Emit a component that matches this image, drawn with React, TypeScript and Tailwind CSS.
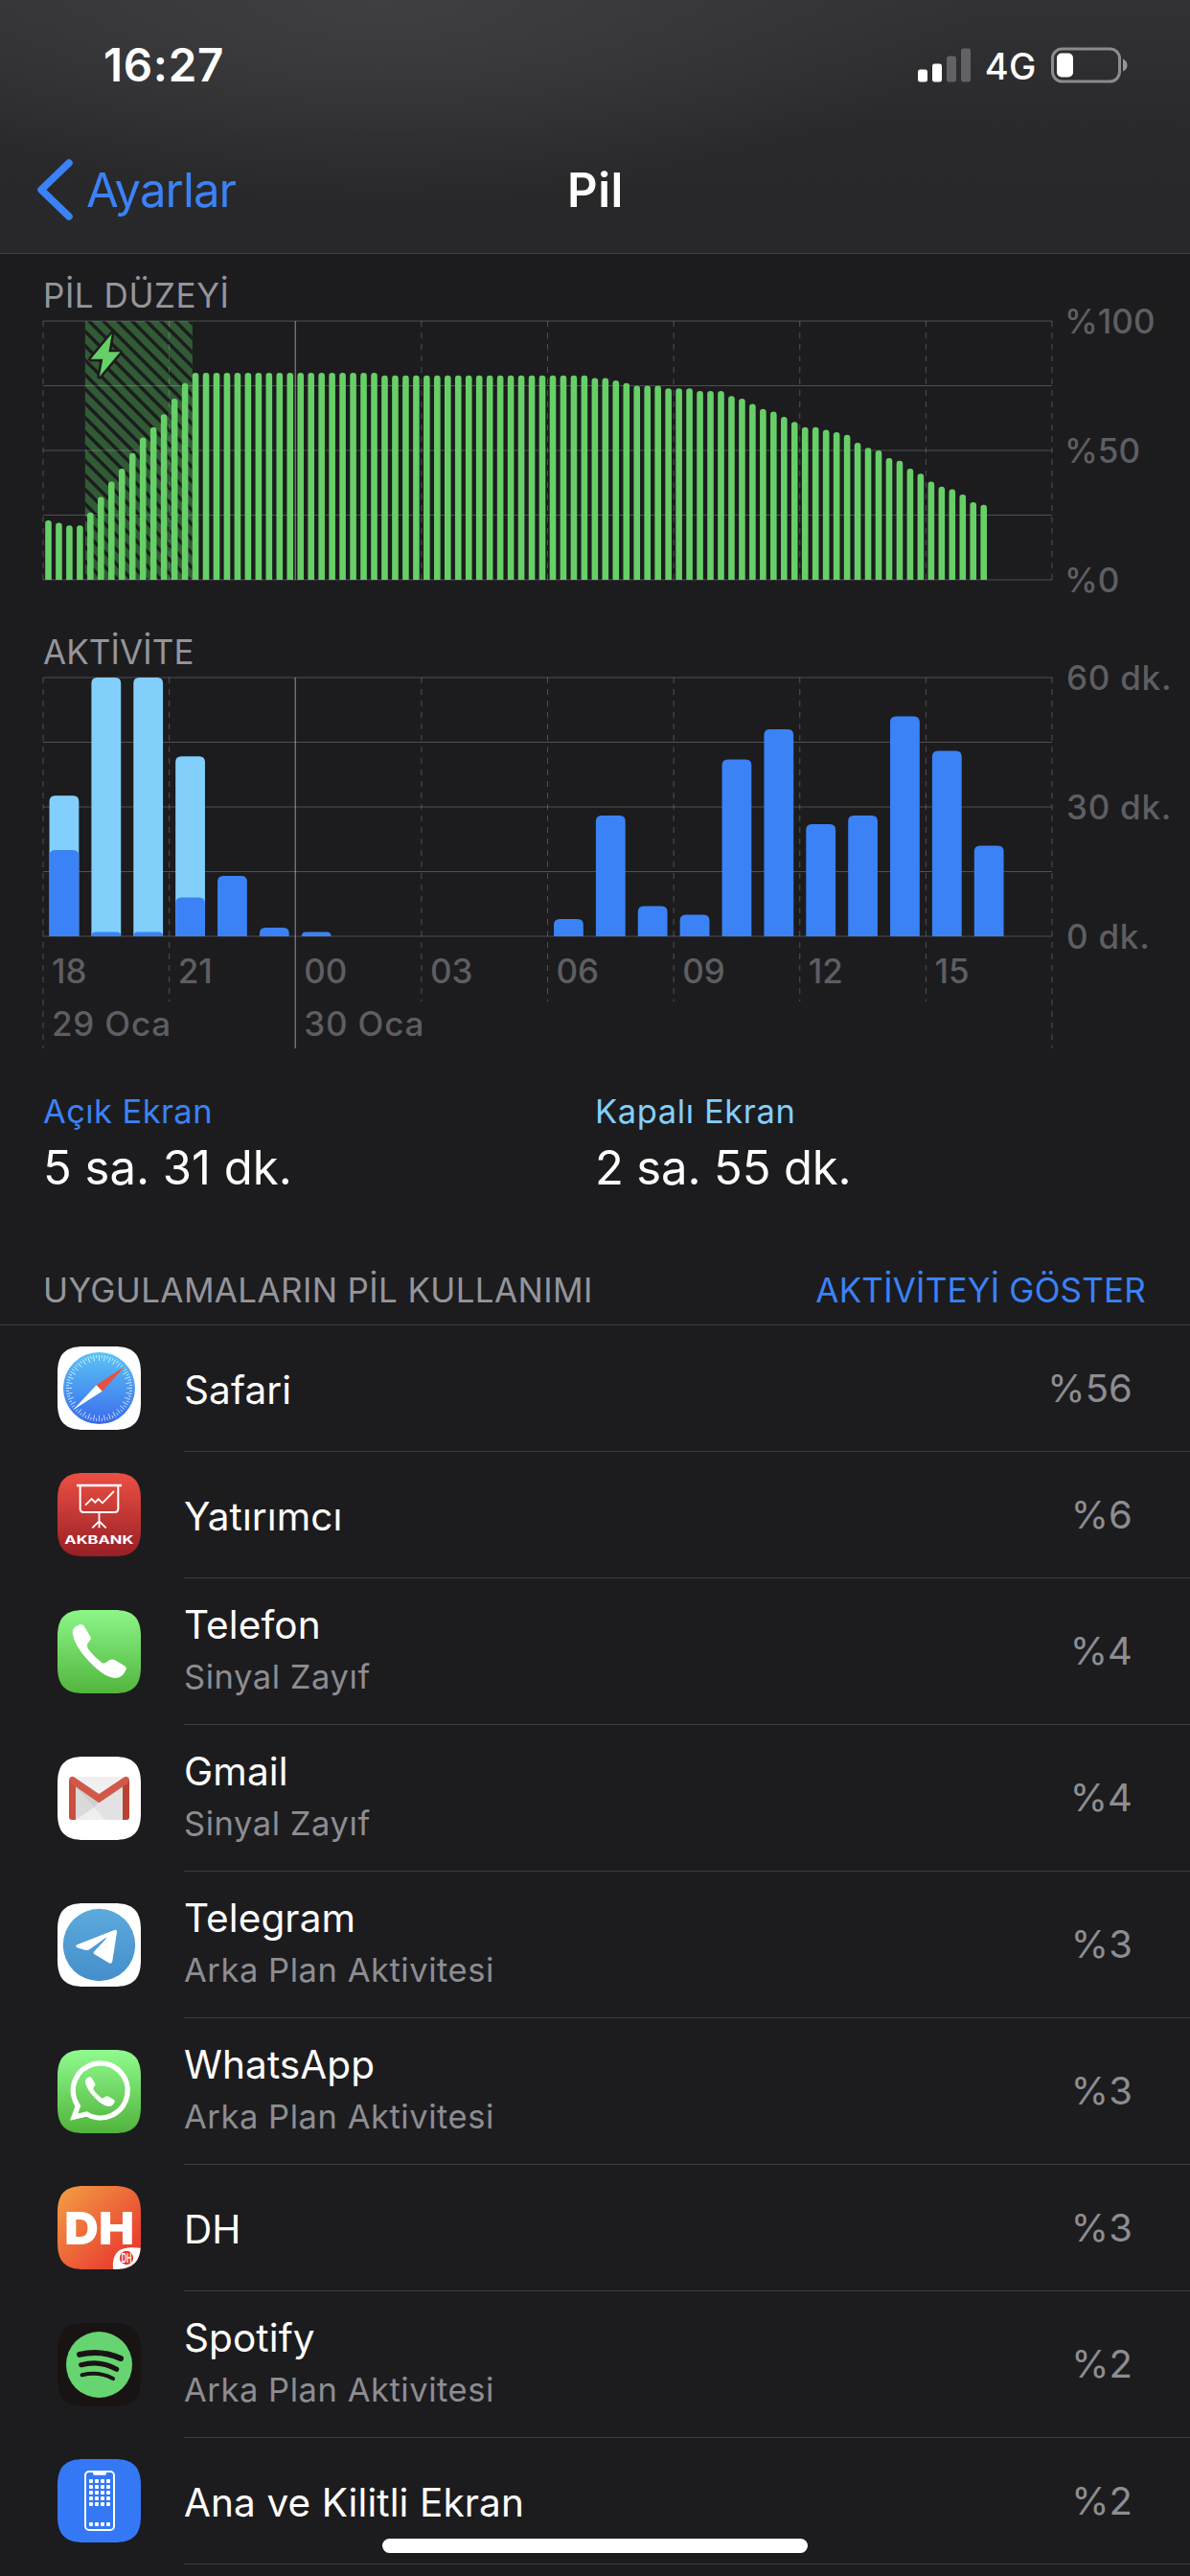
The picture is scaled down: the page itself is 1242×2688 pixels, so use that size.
import React from "react";

const PLOT_W = 1053;
const PLOT_H = 270;

// one sample every 15 minutes, 18:00 -> 16:30
const levels = [
  23, 22, 21, 21, 26, 32, 38, 43, 49, 55, 59, 64, 70, 76,
  ...Array(18).fill(80),
  ...Array(20).fill(79),
  78, 78, 77, 76, 75, 75, 75, 74, 74, 74, 73, 73, 73, 71, 70, 68, 66, 65, 63,
  61, 59, 59, 58, 57, 56, 53, 51, 50, 47, 46, 43, 41, 38, 36, 35, 33, 30, 29,
];

// minutes per hour, total includes the screen-off part
const activity = [
  { hour: 0, on: 20, total: 32.6 },
  { hour: 1, on: 1, total: 60 },
  { hour: 2, on: 1, total: 60 },
  { hour: 3, on: 9, total: 41.7 },
  { hour: 4, on: 14, total: 14 },
  { hour: 5, on: 2, total: 2 },
  { hour: 6, on: 1, total: 1 },
  { hour: 12, on: 4, total: 4 },
  { hour: 13, on: 28, total: 28 },
  { hour: 14, on: 7, total: 7 },
  { hour: 15, on: 5, total: 5 },
  { hour: 16, on: 41, total: 41 },
  { hour: 17, on: 48, total: 48 },
  { hour: 18, on: 26, total: 26 },
  { hour: 19, on: 28, total: 28 },
  { hour: 20, on: 51, total: 51 },
  { hour: 21, on: 43, total: 43 },
  { hour: 22, on: 21, total: 21 },
];

const hours = ["18", "21", "00", "03", "06", "09", "12", "15"];

// bar with only its top corners rounded
const barPath = (x: number, w: number, h: number, r: number) => {
  const top = PLOT_H - h;
  const k = Math.min(r, h);
  return `M${x} ${PLOT_H}V${top + k}Q${x} ${top} ${x + k} ${top}H${x + w - k}Q${x + w} ${top} ${x + w} ${top + k}V${PLOT_H}Z`;
};

const Grid = ({ tall, short }: { tall: number; short: number }) => (
  <g stroke="#ebebf5" strokeOpacity={0.25}>
    {[0, 1, 2, 3, 4].map((i) => (
      <line key={i} x1={0} x2={PLOT_W} y1={i * 67.5} y2={i * 67.5} />
    ))}
    {[0, 1, 2, 3, 4, 5, 6, 7, 8].map((i) => {
      const x = (i * PLOT_W) / 8;
      if (i === 2) {
        return <line key={i} x1={x} x2={x} y1={0} y2={tall} strokeOpacity={0.42} strokeWidth={1.4} />;
      }
      return (
        <line
          key={i}
          x1={x}
          x2={x}
          y1={0}
          y2={i === 0 || i === 8 ? tall : short}
          strokeDasharray="6 6"
        />
      );
    })}
  </g>
);

const AxisLabels = ({ labels, className }: { labels: string[]; className: string }) => (
  <div className={`flex h-[270px] flex-col justify-between text-[35px] font-medium text-[#5e5e62] ${className}`}>
    {labels.map((l) => (
      <div key={l} className="flex h-0 items-center whitespace-nowrap">
        {l}
      </div>
    ))}
  </div>
);

const LevelChart = () => {
  const step = PLOT_W / 96;
  return (
    <div className="flex h-[270px]">
      <svg width={PLOT_W} height={PLOT_H} className="shrink-0 overflow-visible">
        <defs>
          <pattern id="hatch" width="15" height="15" patternUnits="userSpaceOnUse" patternTransform="translate(44 -4)">
            <path d="M-15 -15L30 30M0 -15L30 15M-15 0L15 30" stroke="#1c1c1e" strokeWidth="3.6" />
          </pattern>
        </defs>
        <rect x={step * 4} y={0} width={112} height={PLOT_H} fill="#315b35" />
        <rect x={step * 4} y={0} width={112} height={PLOT_H} fill="url(#hatch)" />
        <Grid tall={PLOT_H} short={PLOT_H} />
        {levels.map((v, i) => (
          <path key={i} d={barPath(step * (i + 0.5) - 3.3, 6.6, v * 2.7, 3.2)} fill="#67cf67" />
        ))}
        <path
          d="M71.7 13.3L49.7 39.7H62.3L58.8 58L80.4 32.3H68.5Z"
          fill="#67cf67"
          stroke="#1c1c1e"
          strokeWidth="5"
          strokeLinejoin="round"
          paintOrder="stroke"
        />
      </svg>
      <AxisLabels labels={["%100", "%50", "%0"]} className="pl-[13px]" />
    </div>
  );
};

const ActivityChart = () => {
  const step = PLOT_W / 24;
  return (
    <div>
      <div className="flex h-[270px]">
        <svg width={PLOT_W} height={PLOT_H} className="shrink-0 overflow-visible">
          <Grid tall={387} short={338} />
          {activity.map(({ hour, on, total }) => {
            const x = step * (hour + 0.5) - 15.4;
            return (
              <g key={hour}>
                {total > on && <path d={barPath(x, 30.8, total * 4.5, 6)} fill="#83cffc" />}
                <path d={barPath(x, 30.8, on * 4.5, 6)} fill="#3b82f6" />
              </g>
            );
          })}
        </svg>
        <AxisLabels labels={["60 dk.", "30 dk.", "0 dk."]} className="pl-[15px] tracking-[0.75px]" />
      </div>
      <div className="w-[1053px] text-[35px] font-medium text-[#5e5e62]">
        <div className="mt-[18px] grid h-[37px] grid-cols-8 items-center leading-none">
          {hours.map((h) => (
            <span key={h} className="pl-[9px]">{h}</span>
          ))}
        </div>
        <div className="mt-[18px] grid h-[37px] grid-cols-8 items-center leading-none tracking-[0.8px]">
          <span className="col-span-2 pl-[9px]">29 Oca</span>
          <span className="col-span-6 pl-[9px]">30 Oca</span>
        </div>
      </div>
    </div>
  );
};

const HANDSET =
  "M129 946Q138 942 144 952L163 983Q167 990 161 996L154 1005Q150 1012 155 1020Q172 1044 199 1065Q206 1069 213 1063L224 1056Q232 1053 240 1057L270 1075Q279 1081 273 1090Q262 1114 240 1113Q205 1110 160 1062Q112 1013 107 972Q106 954 129 946Z";

// all app icons are drawn on a 261 unit tile
const Tile = ({ id, from, to, diagonal, children }: {
  id: string;
  from: string;
  to: string;
  diagonal?: boolean;
  children: React.ReactNode;
}) => (
  <svg viewBox="0 0 261 261" className="size-[87px] shrink-0">
    <defs>
      <linearGradient id={`${id}-bg`} x1="0" y1="0" x2={diagonal ? 1 : 0} y2="1">
        <stop offset="0" stopColor={from} />
        <stop offset="1" stopColor={to} />
      </linearGradient>
      <clipPath id={`${id}-clip`}>
        <path d="M0 84C0 24 24 0 84 0H177C237 0 261 24 261 84V177C261 237 237 261 177 261H84C24 261 0 237 0 177Z" />
      </clipPath>
    </defs>
    <g clipPath={`url(#${id}-clip)`}>
      <rect width="261" height="261" fill={`url(#${id}-bg)`} />
      {children}
    </g>
  </svg>
);

const SafariIcon = () => (
  <Tile id="safari" from="#ffffff" to="#ffffff">
    <defs>
      <linearGradient id="safari-dial" x1="0" y1="0" x2="0" y2="1">
        <stop offset="0" stopColor="#5ac4f5" />
        <stop offset="1" stopColor="#3a6bec" />
      </linearGradient>
    </defs>
    <circle cx="130.5" cy="130.5" r="112.5" fill="url(#safari-dial)" />
    {Array.from({ length: 72 }, (_, i) => (
      <line
        key={i}
        x1="130.5"
        x2="130.5"
        y1="27"
        y2={i % 2 ? 36 : 45}
        stroke="#fff"
        strokeOpacity="0.85"
        strokeWidth="2.4"
        transform={`rotate(${i * 5} 130.5 130.5)`}
      />
    ))}
    <path d="M211 62L122 121L140 140Z" fill="#e8503f" />
    <path d="M49 199L122 121L140 140Z" fill="#fff" />
  </Tile>
);

const YatirimciIcon = () => (
  <Tile id="akbank" from="#ec5044" to="#981f25">
    <g fill="none" stroke="#fff" strokeWidth="6">
      <path d="M60 39H201" strokeWidth="7" />
      <path d="M71 40V112Q71 123 82 123H179Q190 123 190 112V40" />
      <path d="M87 101L107 81L118 92L128 82L141 94L177 57" strokeWidth="5.5" />
      <path d="M130.5 124V172M109 172L130.5 151L152 172" strokeWidth="5.5" />
    </g>
    <text
      x="22"
      y="221"
      textLength="216"
      lengthAdjust="spacingAndGlyphs"
      fill="#fff"
      className="font-[Inter,sans-serif] text-[34px] font-bold"
    >
      AKBANK
    </text>
  </Tile>
);

const PhoneIcon = () => (
  <Tile id="phone" from="#8cf688" to="#52b53e">
    <path d={HANDSET} transform="translate(-60 -900)" fill="#fff" />
  </Tile>
);

const GmailIcon = () => (
  <Tile id="gmail" from="#ffffff" to="#ffffff">
    <g transform="translate(-60 -159)">
      <rect x="105" y="222" width="171" height="135" fill="#e2e2e2" />
      <path d="M117 253L212 357H117Z" fill="#dadada" />
      <path d="M117 357L174 318L212 357Z" fill="#efefef" />
      <path d="M117 253L174 318L190 300Z" fill="#cfcfcf" />
      <path d="M105 222H276L190 285Z" fill="#f0f0f0" />
      <path d="M96 232H117V357H105Q96 357 96 348Z" fill="#c9503f" />
      <path d="M264 232H285V348Q285 357 276 357H264Z" fill="#b94434" />
      <path d="M96 232Q97 221 108 221L115 225L190 276L266 225L273 221Q284 221 285 232Q285 239 279 243L190 304L102 243Q96 239 96 232Z" fill="#d2584a" />
    </g>
  </Tile>
);

const TelegramIcon = () => (
  <Tile id="telegram" from="#ffffff" to="#ffffff">
    <defs>
      <linearGradient id="telegram-disc" x1="0" y1="0" x2="0" y2="1">
        <stop offset="0" stopColor="#5caadc" />
        <stop offset="1" stopColor="#458ecb" />
      </linearGradient>
    </defs>
    <circle cx="130.5" cy="130.5" r="113" fill="url(#telegram-disc)" />
    <path
      transform="translate(-60 -618)"
      d="M121 748L238 702Q247 699 246 709L232 799Q230 810 221 805L175 777Q171 773 175 769L213 728Q214 725 210 727L160 763Q155 766 148 765L121 757Q114 752 121 748Z"
      fill="#fff"
    />
  </Tile>
);

const WhatsAppIcon = () => (
  <Tile id="whatsapp" from="#90fb8e" to="#50b33b">
    <g transform="translate(-60 -1077)">
      <path
        d="M124 1253L111.5 1287L151 1278A85.5 85.5 0 1 0 124 1253Z"
        fill="none"
        stroke="#fff"
        strokeWidth="16"
        strokeMiterlimit="8"
      />
      <path d={HANDSET} transform="translate(147 1161) scale(0.55) translate(-107 -944)" fill="#fff" />
    </g>
  </Tile>
);

const DhIcon = () => (
  <Tile id="dh" from="#f3a044" to="#e72b2c" diagonal>
    <text
      x="22"
      y="182"
      textLength="218"
      lengthAdjust="spacingAndGlyphs"
      fill="#fff"
      className="font-[Inter,sans-serif] text-[142px] font-black"
    >
      DH
    </text>
    <path d="M174 261Q170 224 188 206Q206 188 261 194V261Z" fill="#fff" />
    <circle cx="216" cy="225" r="21.5" fill="#e0392f" />
    <text
      x="200"
      y="240"
      textLength="32"
      lengthAdjust="spacingAndGlyphs"
      fill="#fff"
      className="font-[Inter,sans-serif] text-[41px] font-semibold"
    >
      DH
    </text>
  </Tile>
);

const SpotifyIcon = () => (
  <Tile id="spotify" from="#191414" to="#191414">
    <circle cx="130.5" cy="130.5" r="103.5" fill="#66d571" />
    <g fill="none" stroke="#191414" strokeLinecap="round">
      <path d="M69 98.5Q136 83 198 111" strokeWidth="18" />
      <path d="M74 131Q134 115 185 145" strokeWidth="15.5" />
      <path d="M77 162.5Q130 150 174 174" strokeWidth="12.5" />
    </g>
  </Tile>
);

const HomeScreenIcon = () => (
  <Tile id="home" from="#3478f6" to="#3478f6">
    <rect x="87" y="39" width="90" height="183" rx="12" fill="none" stroke="#fff" strokeWidth="6" />
    <path d="M111 38H153V45Q153 50 148 50H116Q111 50 111 45Z" fill="#fff" />
    {[63, 81, 99, 117, 135, 198].map((y) =>
      [99, 117, 135, 153].map((x) => (
        <rect key={`${x}-${y}`} x={x} y={y} width="12" height="12" rx="3" fill="#fff" />
      ))
    )}
  </Tile>
);

const apps = [
  { name: "Safari", value: "%56", icon: <SafariIcon /> },
  { name: "Yatırımcı", value: "%6", icon: <YatirimciIcon /> },
  { name: "Telefon", note: "Sinyal Zayıf", value: "%4", icon: <PhoneIcon /> },
  { name: "Gmail", note: "Sinyal Zayıf", value: "%4", icon: <GmailIcon /> },
  { name: "Telegram", note: "Arka Plan Aktivitesi", value: "%3", icon: <TelegramIcon /> },
  { name: "WhatsApp", note: "Arka Plan Aktivitesi", value: "%3", icon: <WhatsAppIcon /> },
  { name: "DH", value: "%3", icon: <DhIcon /> },
  { name: "Spotify", note: "Arka Plan Aktivitesi", value: "%2", icon: <SpotifyIcon /> },
  { name: "Ana ve Kilitli Ekran", value: "%2", icon: <HomeScreenIcon /> },
];

const AppRow = ({ name, note, value, icon }: {
  name: string;
  note?: string;
  value: string;
  icon: React.ReactNode;
}) => (
  <li className={`flex items-center pl-[60px] ${note ? "h-[153px]" : "h-[132px]"}`}>
    <div className={note ? "" : "mb-px"}>{icon}</div>
    <div className="ml-[45px] flex h-full flex-1 items-center justify-between border-b border-[#3d3d41] pr-[60px]">
      <div className={`flex flex-col gap-3 ${note ? "pb-[7px]" : "pt-1"}`}>
        <span className="text-[40.5px] leading-[48px] tracking-[0.1px] text-white">{name}</span>
        {note && <span className="text-[34.5px] leading-[36px] tracking-[0.55px] text-[#8d8d92]">{note}</span>}
      </div>
      <span className="text-[40px] leading-none tracking-[0.1px] text-[#8d8d92]">{value}</span>
    </div>
  </li>
);

const StatusBar = () => (
  <div className="flex h-[136px] items-center justify-between pr-[65px] pl-[108px]">
    <span className="text-[47.5px] leading-none font-semibold tracking-[0.7px]">16:27</span>
    <div className="flex items-center">
      <svg width="56" height="36" viewBox="0 0 56 36" fill="#fff">
        <rect x="0" y="22.5" width="10" height="13" rx="2.5" />
        <rect x="15" y="16.5" width="10" height="19" rx="2.5" />
        <rect x="30" y="8.5" width="10" height="27" rx="2.5" fillOpacity="0.25" />
        <rect x="45" y="0.5" width="10" height="35" rx="2.5" fillOpacity="0.25" />
      </svg>
      <span className="ml-[14px] pt-[2px] text-[38px] leading-none font-medium tracking-[0.5px]">4G</span>
      <svg width="80" height="38" viewBox="0 0 80 38" className="ml-[15px]">
        <rect x="1.5" y="2" width="70" height="34" rx="10" fill="none" stroke="#fff" strokeOpacity="0.45" strokeWidth="3" />
        <rect x="6" y="6.5" width="17" height="25" rx="5" fill="#fff" />
        <path d="M75 12.5Q79.5 14.5 79.5 19T75 25.5Z" fill="#fff" fillOpacity="0.5" />
      </svg>
    </div>
  </div>
);

export default function App() {
  return (
    <div className="relative h-[2688px] w-[1242px] overflow-hidden bg-[#1c1c1e] font-[Inter,sans-serif] text-white">
      <header className="h-[265px] border-b border-[#3f3f42] bg-[#29292b] bg-[radial-gradient(ellipse_620px_210px_at_400px_0px,#3f3f41_0%,rgba(63,63,65,0)_100%),linear-gradient(to_bottom,#323234_0%,#29292b_55%,#28282a_100%)]">
        <StatusBar />
        <nav className="grid h-[128px] grid-cols-3 items-center pb-1">
          <div className="flex items-center pl-[38px] text-[#3b82f6]">
            <svg width="39" height="64" viewBox="0 0 39 64">
              <path d="M34 4L5 32L34 60" fill="none" stroke="currentColor" strokeWidth="7.5" strokeLinecap="round" strokeLinejoin="round" />
            </svg>
            <span className="ml-[13px] text-[49px] leading-none tracking-[-0.9px]">Ayarlar</span>
          </div>
          <h1 className="pl-px text-center text-[49px] leading-none font-semibold tracking-[0.5px]">Pil</h1>
        </nav>
      </header>

      <section className="px-[45px]">
        <h2 className="mt-[25px] mb-[9px] h-9 text-[35px] leading-9 tracking-[0.55px] text-[#95959b]">PİL DÜZEYİ</h2>
        <LevelChart />
        <h2 className="mt-[57px] mb-[9px] h-9 text-[35px] leading-9 tracking-[0.1px] text-[#95959b]">AKTİVİTE</h2>
        <ActivityChart />

        <div className="mt-[55px] grid grid-cols-2">
          <div>
            <p className="text-[34.5px] leading-9 tracking-[0.4px] text-[#3b82f6]">Açık Ekran</p>
            <p className="mt-[11px] text-[49px] leading-[60px]">5 sa. 31 dk.</p>
          </div>
          <div>
            <p className="text-[34.5px] leading-9 tracking-[0.6px] text-[#83cffc]">Kapalı Ekran</p>
            <p className="mt-[11px] text-[49px] leading-[60px] tracking-[-0.15px]">2 sa. 55 dk.</p>
          </div>
        </div>
      </section>

      <div className="mt-[79px] flex justify-between border-b border-[#3d3d41] pr-[46px] pb-[18px] pl-[45px] text-[35px] leading-9">
        <h2 className="tracking-[0.36px] text-[#95959b]">UYGULAMALARIN PİL KULLANIMI</h2>
        <button className="tracking-[0.2px] text-[#3b82f6]">AKTİVİTEYİ GÖSTER</button>
      </div>
      <ul>
        {apps.map((app) => (
          <AppRow key={app.name} {...app} />
        ))}
      </ul>

      <div className="absolute bottom-[24px] left-[399px] h-[15px] w-[444px] rounded-full bg-white" />
    </div>
  );
}
